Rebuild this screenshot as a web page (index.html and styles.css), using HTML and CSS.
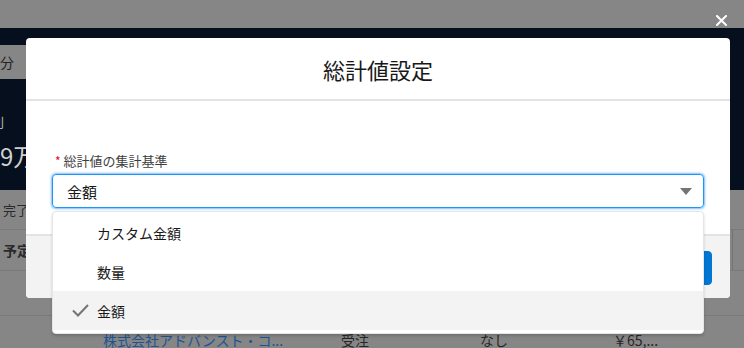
FILE: index.html
```html
<!DOCTYPE html>
<html lang="ja">
<head>
<meta charset="utf-8">
<title>総計値設定</title>
<link rel="stylesheet" href="styles.css">
</head>
<body>
<div class="page">
  <div class="topbar"></div>
  <div class="hero">
    <div class="hero-btn">区分</div>
    <div class="hero-label">規則</div>
    <div class="hero-value">9万</div>
  </div>
  <div class="tabs"><span class="tab">完了</span></div>
  <div class="thead"><span class="th th-first">予定</span><span class="th th-last"></span></div>
  <div class="row row-empty"></div>
  <div class="row row-data">
    <span class="cell cell-link">株式会社アドバンスト・コ...</span>
    <span class="cell">受注</span>
    <span class="cell">なし</span>
    <span class="cell">￥65,...</span>
  </div>
</div>

<button class="close" aria-label="閉じる">
  <svg width="11" height="11" viewBox="0 0 11 11"><path d="M1 1 L10 10 M10 1 L1 10" stroke="#fff" stroke-width="2" stroke-linecap="square"/></svg>
</button>

<section class="modal">
  <header class="modal-header"><h2 class="modal-title">総計値設定</h2></header>
  <div class="modal-body">
    <label class="field-label"><abbr class="req">*</abbr>総計値の集計基準</label>
    <div class="combo">
      <div class="combo-input">
        <span class="combo-value">金額</span>
        <svg class="combo-caret" width="12" height="7" viewBox="0 0 12 7"><path d="M0 0 H12 L6 7 Z" fill="#747474"/></svg>
      </div>
      <ul class="listbox">
        <li class="option"><span class="opt-icon"></span><span>カスタム金額</span></li>
        <li class="option"><span class="opt-icon"></span><span>数量</span></li>
        <li class="option selected"><span class="opt-icon"><svg width="17" height="13" viewBox="0 0 17 13"><path d="M1 6.5 L6 11.5 L16 1" fill="none" stroke="#747474" stroke-width="2"/></svg></span><span>金額</span></li>
      </ul>
    </div>
  </div>
  <footer class="modal-footer">
    <button class="btn btn-neutral">キャンセル</button>
    <button class="btn btn-brand">保存</button>
  </footer>
</section>
</body>
</html>
```
FILE: styles.css
```css
* { box-sizing: border-box; }
html, body { margin: 0; padding: 0; }
body {
  width: 744px;
  height: 348px;
  overflow: hidden;
  font-family: "Noto Sans CJK JP", "Noto Sans", sans-serif;
  background: #868686;
  position: relative;
}

.page { display: flex; flex-direction: column; }
.topbar { height: 28px; background: #868686; }
.hero {
  height: 162px;
  background: #060f1d;
  display: flex;
  flex-direction: column;
  align-items: flex-start;
  padding-top: 17px;
}
.hero-btn {
  margin-left: -14px;
  width: 80px;
  height: 34px;
  background: #868686;
  color: #222;
  font-size: 14px;
  line-height: 34px;
}
.hero-label {
  margin-top: 35px;
  margin-left: -22px;
  font-size: 13px;
  line-height: 16px;
  color: #b8b8b8;
}
.hero-value {
  margin-top: 12px;
  font-size: 24px;
  line-height: 28px;
  color: #cfcfcf;
}
.tabs {
  height: 40px;
  border-bottom: 1px solid #7a7a7a;
  display: flex;
  align-items: center;
  padding-left: 3px;
  font-size: 13px;
  color: #2a2a2a;
}
.thead {
  height: 41px;
  border-bottom: 1px solid #7a7a7a;
  display: flex;
  font-size: 14px;
  font-weight: 700;
  color: #2a2a2a;
}
.th { display: flex; align-items: center; }
.th-first { width: 733px; padding-left: 3px; border-right: 1px solid #737373; }
.th-last { flex: 1; }
.row-empty { height: 45px; border-bottom: 1px solid #7a7a7a; }
.row-data {
  display: grid;
  grid-template-columns: 238px 139px 133px auto;
  padding: 14px 0 0 103px;
  font-size: 14px;
  line-height: 20px;
  color: #262626;
}
.cell-link { color: #1d5493; }

.close {
  position: absolute;
  top: 15px;
  right: 17px;
  width: 11px;
  height: 11px;
  padding: 0;
  border: 0;
  background: none;
  display: block;
}
.close svg { display: block; }

.modal {
  position: absolute;
  left: 26px;
  top: 38px;
  width: 704px;
  background: #fff;
  border-radius: 4px;
}
.modal-header {
  height: 63px;
  border-bottom: 2px solid #e3e3e3;
  display: flex;
  align-items: center;
  justify-content: center;
}
.modal-title {
  margin: 0;
  font-size: 22px;
  font-weight: 400;
  color: #181818;
  line-height: 28px;
}
.modal-body { padding: 51px 26px 26px; }
.field-label {
  display: block;
  font-size: 13px;
  line-height: 18px;
  color: #3e3e3e;
  margin-bottom: 4px;
}
.req {
  color: #ea001e;
  text-decoration: none;
  font-size: 12px;
  margin: 0 3px 0 3px;
}
.combo { position: relative; }
.combo-input {
  height: 34px;
  border: 1px solid #1b96ff;
  border-radius: 4px;
  box-shadow: 0 0 3px #0176d3;
  display: flex;
  align-items: center;
  justify-content: space-between;
  padding: 0 11px 0 14px;
}
.combo-value { font-size: 15px; color: #181818; }
.combo-caret { display: block; }
.listbox {
  position: absolute;
  left: 0;
  right: 0;
  top: calc(100% + 3px);
  margin: 0;
  padding: 1px 0 3px;
  list-style: none;
  background: #fff;
  border: 1px solid #e5e5e5;
  border-radius: 4px;
  box-shadow: 0 2px 3px rgba(0, 0, 0, 0.16);
  z-index: 2;
}
.option {
  height: 39px;
  display: flex;
  align-items: center;
  padding-left: 19px;
  font-size: 14px;
  color: #181818;
}
.option.selected { background: #f3f3f3; }
.opt-icon { width: 17px; margin-right: 8px; display: flex; align-items: center; }
.opt-icon svg { display: block; }

.modal-footer {
  height: 64px;
  border-top: 2px solid #e3e3e3;
  background: #f3f3f3;
  border-radius: 0 0 4px 4px;
  display: flex;
  justify-content: flex-end;
  align-items: center;
  gap: 8px;
  padding: 2px 18px 0;
}
.btn {
  height: 34px;
  padding: 0 16px;
  border-radius: 4px;
  font-family: inherit;
  font-size: 13px;
}
.btn-neutral { background: #fff; border: 1px solid #c9c9c9; color: #0176d3; }
.btn-brand { background: #0176d3; border: 1px solid #0176d3; color: #fff; }
```
